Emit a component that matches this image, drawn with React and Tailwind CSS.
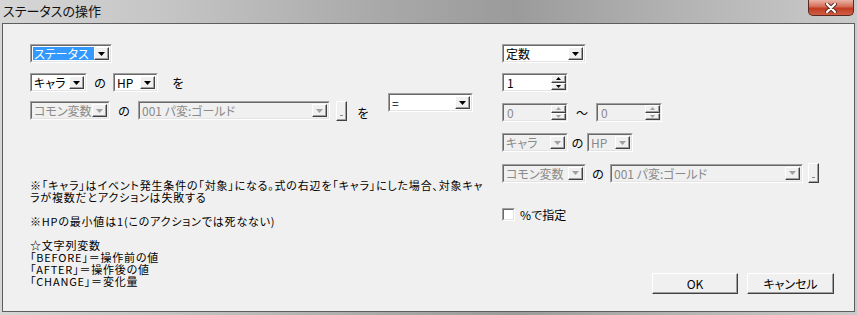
import React from "react";
import clsx from "clsx";

// raised / sunken bevels in the classic Windows look
const RAISED =
  "border border-t-white border-l-white border-r-[#404040] border-b-[#404040] bg-[#f0f0f0] shadow-[inset_-1px_-1px_0_#a0a0a0]";
const SUNKEN_OUT =
  "border border-t-[#a0a0a0] border-l-[#a0a0a0] border-r-white border-b-white";
const SUNKEN_IN =
  "border border-t-[#696969] border-l-[#696969] border-r-[#e3e3e3] border-b-[#e3e3e3]";

const Arrow = ({ disabled, up, small }) => (
  <svg
    width={small ? 5 : 7}
    height={small ? 3 : 4}
    viewBox={small ? "0 0 5 3" : "0 0 7 4"}
    className={clsx(up && "rotate-180")}
  >
    <path
      d={small ? "M0 0h5L2.5 3z" : "M0 0h7L3.5 4z"}
      fill={disabled ? "#a0a0a0" : "#000"}
    />
  </svg>
);

const Combo = ({ w, text, disabled, selected }) => (
  <div className={clsx("flex h-[19px] shrink-0", SUNKEN_OUT, w)}>
    <div
      className={clsx(
        "flex min-w-0 flex-1 p-[1px]",
        SUNKEN_IN,
        disabled ? "bg-[#f0f0f0]" : "bg-white"
      )}
    >
      <div
        className={clsx(
          "flex min-w-0 flex-1 items-center whitespace-nowrap pl-[1px] text-[12px] leading-[13px]",
          selected && "bg-[#3399ff] text-white",
          disabled && "text-[#8a8a8a]"
        )}
      >
        {text}
      </div>
      <div
        className={clsx(
          "flex w-[15px] shrink-0 items-center justify-center",
          RAISED
        )}
      >
        <Arrow disabled={disabled} />
      </div>
    </div>
  </div>
);

const Spin = ({ w, text, disabled }) => (
  <div className={clsx("flex h-[19px] shrink-0", SUNKEN_OUT, w)}>
    <div
      className={clsx(
        "flex min-w-0 flex-1",
        SUNKEN_IN,
        disabled ? "bg-[#f0f0f0]" : "bg-white"
      )}
    >
      <div
        className={clsx(
          "flex flex-1 items-center pl-[3px] text-[12px] leading-[13px]",
          disabled && "text-[#8a8a8a]"
        )}
      >
        {text}
      </div>
      <div className="flex w-[15px] shrink-0 flex-col">
        <div className={clsx("flex flex-1 items-center justify-center", RAISED)}>
          <Arrow small up disabled={disabled} />
        </div>
        <div className={clsx("flex flex-1 items-center justify-center", RAISED)}>
          <Arrow small disabled={disabled} />
        </div>
      </div>
    </div>
  </div>
);

const DotBtn = ({ className }) => (
  <div
    className={clsx(
      "flex h-[20px] w-[11px] shrink-0 items-end justify-center pb-[4px]",
      RAISED,
      className
    )}
  >
    <div className="h-[1px] w-[3px] bg-[#8a8a8a]" />
  </div>
);

const Btn = ({ w, children }) => (
  <div
    className={clsx(
      "flex h-[21px] items-center justify-center text-[12px] leading-[13px]",
      RAISED,
      w
    )}
  >
    {children}
  </div>
);

const Label = ({ w, children }) => (
  <span className={clsx("shrink-0 text-center text-[12px] leading-[13px]", w)}>
    {children}
  </span>
);

export default function App() {
  return (
    <div className="flex h-[315px] w-[857px] flex-col bg-[linear-gradient(90deg,#d6d6d6_0%,#c4c4c4_20%,#a8a8a8_45%,#9b9b9b_60%,#b4b4b4_80%,#cacaca_100%)] font-['Noto_Sans_CJK_JP',sans-serif] text-black [font-feature-settings:'palt']">
      {/* title bar */}
      <div className="flex h-[23px] shrink-0 items-start">
        <span className="ml-[3px] mt-[3px] text-[13px] leading-[16px] text-[#111]">
          ステータスの操作
        </span>
        <div className="ml-auto mr-[3px] flex h-[16px] w-[46px] items-center justify-center rounded-b-[5px] border border-t-0 border-[#5a2a22] bg-[linear-gradient(180deg,#eab3a6_0%,#d46b55_45%,#c23b22_55%,#cf5e45_100%)]">
          <svg width="12" height="10" viewBox="0 0 12 10">
            <path d="M2 1l8 8M10 1L2 9" stroke="#5a2a22" strokeWidth="4" strokeLinecap="round" />
            <path d="M2 1l8 8M10 1L2 9" stroke="#fff" strokeWidth="2.2" strokeLinecap="round" />
          </svg>
        </div>
      </div>

      {/* client area */}
      <div className="mx-[2px] mb-[3px] flex flex-1 border border-[#5e5e5e] bg-[#f0f0f0] pb-[17px] pl-[27px] pr-[20px] pt-[20px]">
        {/* left column */}
        <div className="flex w-[472px] shrink-0 flex-col">
          <Combo w="w-[82px]" text="ステータス" selected />

          <div className="mt-[10px] flex items-center">
            <Combo w="w-[57px]" text="キャラ" />
            <Label w="w-[26px]">の</Label>
            <Combo w="w-[45px]" text="HP" />
            <Label w="w-[12px] ml-[14px]">を</Label>
          </div>

          <div className="flex items-start">
            <Combo w="w-[80px] mt-[9px]" text="コモン変数" disabled />
            <Label w="w-[28px] mt-[12px]">の</Label>
            <Combo w="w-[192px] mt-[9px]" text="001 パ変:ゴールド" disabled />
            <DotBtn className="ml-[6px] mt-[9px]" />
            <Label w="w-[12px] ml-[10px] mt-[14px]">を</Label>
            <Combo w="w-[85px] ml-[19px] mt-[1px]" text="=" />
          </div>

          <div className="mt-[58px] whitespace-nowrap text-[11px] leading-[12px] tracking-[0.8px]">
            <p>※「キャラ」はイベント発生条件の「対象」になる。式の右辺を「キャラ」にした場合、対象キャ</p>
            <p>ラが複数だとアクションは失敗する</p>
            <p className="h-[12px]" />
            <p>※HPの最小値は1(このアクションでは死なない)</p>
            <p className="h-[12px]" />
            <p>☆文字列変数</p>
            <p>「BEFORE」＝操作前の値</p>
            <p>「AFTER」＝操作後の値</p>
            <p>「CHANGE」＝変化量</p>
          </div>
        </div>

        {/* right column */}
        <div className="flex flex-1 flex-col">
          <Combo w="w-[84px]" text="定数" />
          <Spin w="w-[66px] mt-[10px]" text="1" />

          <div className="mt-[11px] flex items-center">
            <Spin w="w-[66px]" text="0" disabled />
            <Label w="w-[28px]">～</Label>
            <Spin w="w-[66px]" text="0" disabled />
          </div>

          <div className="mt-[11px] flex items-center">
            <Combo w="w-[66px]" text="キャラ" disabled />
            <Label w="w-[19px]">の</Label>
            <Combo w="w-[46px]" text="HP" disabled />
          </div>

          <div className="mt-[11px] flex items-center">
            <Combo w="w-[84px]" text="コモン変数" disabled />
            <Label w="w-[24px]">の</Label>
            <Combo w="w-[193px]" text="001 パ変:ゴールド" disabled />
            <DotBtn className="ml-[5px]" />
          </div>

          <div className="mt-[25px] flex items-center gap-[5px]">
            <div className={clsx("h-[13px] w-[13px]", SUNKEN_OUT)}>
              <div className={clsx("h-full w-full bg-white", SUNKEN_IN)} />
            </div>
            <span className="text-[12px] leading-[13px]">%で指定</span>
          </div>

          <div className="mt-auto flex justify-end gap-[9px]">
            <Btn w="w-[86px]">OK</Btn>
            <Btn w="w-[87px]">キャンセル</Btn>
          </div>
        </div>
      </div>
    </div>
  );
}
